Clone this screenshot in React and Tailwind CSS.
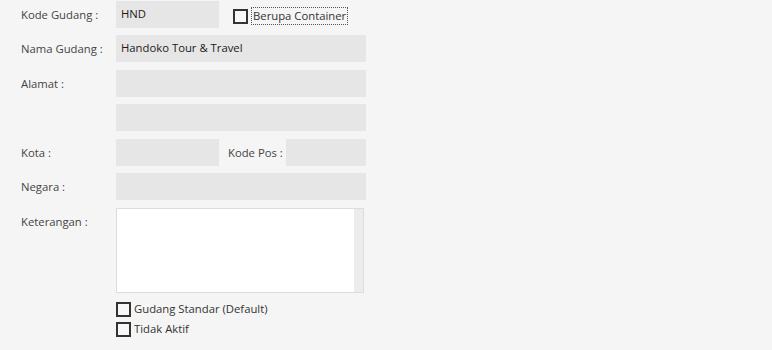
import React from "react";

const font = { fontFamily: '"Open Sans", "Noto Sans", sans-serif' };

function Label({ children, className = "" }) {
  return <div className={`w-[95px] shrink-0 pt-[6px] text-[11.3px] text-[#444] whitespace-nowrap ${className}`}>{children}</div>;
}

function Field({ value = "", className = "w-[250px]" }) {
  return (
    <div className={`h-[27px] bg-[#e6e6e6] px-[5px] flex items-center text-[11.3px] text-[#1a1a1a] ${className}`}>
      {value}
    </div>
  );
}

function Check({ label, focused }) {
  return (
    <label className="flex items-center gap-[3px] text-[11.3px] text-[#333] whitespace-nowrap">
      <span className="w-[15px] h-[15px] border-2 border-[#333] bg-[#f8f8f8]" />
      <span className={focused ? "border border-dotted border-[#555] px-[1px] leading-[16px]" : "leading-[16px]"}>{label}</span>
    </label>
  );
}

export default function App() {
  return (
    <div style={font} className="w-[772px] h-[350px] bg-[#f5f5f5] overflow-hidden pl-[21px] pt-[1px]">
      <div className="flex h-[27px]">
        <Label>Kode Gudang :</Label>
        <Field value="HND" className="w-[103px]" />
        <div className="ml-[14px] pt-[6px]">
          <Check label="Berupa Container" focused />
        </div>
      </div>

      <div className="flex h-[27px] mt-[7px]">
        <Label>Nama Gudang :</Label>
        <Field value="Handoko Tour & Travel" />
      </div>

      <div className="flex h-[27px] mt-[8px]">
        <Label>Alamat :</Label>
        <Field />
      </div>

      <div className="flex h-[27px] mt-[7px]">
        <Label />
        <Field />
      </div>

      <div className="flex h-[27px] mt-[8px]">
        <Label>Kota :</Label>
        <Field className="w-[103px]" />
        <div className="w-[67px] pl-[9px] pt-[6px] text-[11.3px] text-[#444] whitespace-nowrap">Kode Pos :</div>
        <Field className="w-[80px]" />
      </div>

      <div className="flex h-[27px] mt-[7px]">
        <Label>Negara :</Label>
        <Field />
      </div>

      <div className="flex mt-[8px]">
        <Label>Keterangan :</Label>
        <div className="w-[248px] h-[85px] border border-[#dcdcdc] bg-white flex justify-end">
          <div className="w-[9px] h-full bg-[#ececec]" />
        </div>
      </div>

      <div className="ml-[95px] mt-[8px] flex flex-col gap-[4px]">
        <Check label="Gudang Standar (Default)" />
        <Check label="Tidak Aktif" />
      </div>
    </div>
  );
}
